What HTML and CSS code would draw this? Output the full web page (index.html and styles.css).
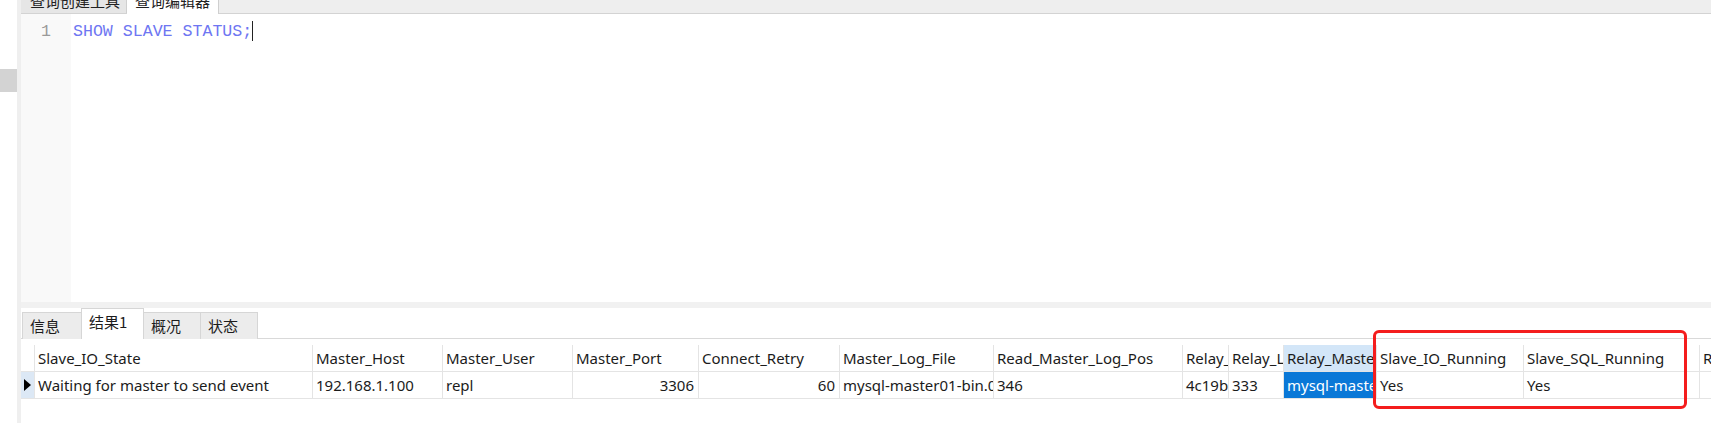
FILE: index.html
```html
<!DOCTYPE html>
<html lang="zh">
<head>
<meta charset="utf-8">
<title>查询编辑器</title>
<link rel="stylesheet" href="styles.css">
</head>
<body>
<div class="app">
  <aside class="sidebar"><div class="side-block"></div></aside>
  <main class="main">
    <div class="top-tabs">
      <div class="ttab"><span>查询创建工具</span></div>
      <div class="ttab active"><span>查询编辑器</span></div>
    </div>
    <div class="editor">
      <div class="gutter"><div class="lineno">1</div></div>
      <div class="code"><span class="kw">SHOW SLAVE STATUS;</span><span class="caret"></span></div>
    </div>
    <div class="splitter"></div>
    <div class="result-tabs">
      <div class="rtab">信息</div>
      <div class="rtab active">结果1</div>
      <div class="rtab">概况</div>
      <div class="rtab">状态</div>
    </div>
    <div class="grid">
      <div class="row head">
        <div class="cell ind"></div>
        <div class="cell">Slave_IO_State</div>
        <div class="cell">Master_Host</div>
        <div class="cell">Master_User</div>
        <div class="cell">Master_Port</div>
        <div class="cell">Connect_Retry</div>
        <div class="cell">Master_Log_File</div>
        <div class="cell">Read_Master_Log_Pos</div>
        <div class="cell">Relay_Log_File</div>
        <div class="cell">Relay_Log_Pos</div>
        <div class="cell sel-head">Relay_Master_Log_File</div>
        <div class="cell">Slave_IO_Running</div>
        <div class="cell">Slave_SQL_Running</div>
        <div class="cell last">Replicate_Do_DB</div>
      </div>
      <div class="row data">
        <div class="cell ind cur"><span class="tri"></span></div>
        <div class="cell">Waiting for master to send event</div>
        <div class="cell">192.168.1.100</div>
        <div class="cell">repl</div>
        <div class="cell num">3306</div>
        <div class="cell num">60</div>
        <div class="cell">mysql-master01-bin.000001</div>
        <div class="cell">346</div>
        <div class="cell">4c19b2e5f1a3-relay-bin.000002</div>
        <div class="cell">333</div>
        <div class="cell sel">mysql-master01-bin.000001</div>
        <div class="cell">Yes</div>
        <div class="cell">Yes</div>
        <div class="cell last"></div>
      </div>
    </div>
  </main>
</div>
<div class="highlight"></div>
</body>
</html>
```
FILE: styles.css
```css
html, body {
  margin: 0;
  padding: 0;
  background: #ffffff;
}
body {
  position: relative;
  width: 1711px;
  height: 423px;
  overflow: hidden;
  font-family: "Noto Sans", "Noto Sans CJK SC", sans-serif;
  color: #1b1b1b;
}
.app {
  display: flex;
  height: 423px;
}
.sidebar {
  width: 17px;
  flex: none;
  background: #ffffff;
  border-right: 4px solid #efefef;
  padding-top: 69px;
}
.side-block {
  height: 23px;
  background: #d3d3d3;
}
.main {
  flex: 1;
  display: flex;
  flex-direction: column;
  min-width: 0;
}
.top-tabs {
  height: 13px;
  flex: none;
  display: flex;
  background: #eeeeee;
  border-bottom: 1px solid #d3d3d3;
}
.ttab {
  height: 13px;
  overflow: hidden;
  white-space: nowrap;
  background: #e6e6e6;
  border-right: 1px solid #cfcfcf;
  font-family: "Noto Sans CJK SC", sans-serif;
  font-size: 15px;
  line-height: 15px;
  color: #222;
  padding: 0 0 0 9px;
  width: 106px;
  box-sizing: border-box;
}
.ttab span {
  display: block;
  margin-top: -7px;
}
.ttab.active {
  background: #ffffff;
  width: 92px;
  margin-bottom: -1px;
  height: 14px;
  padding-left: 8px;
}
.editor {
  height: 288px;
  flex: none;
  display: flex;
}
.gutter {
  width: 50px;
  flex: none;
  background: #f9f9f9;
  box-sizing: border-box;
  padding: 7px 20px 0 0;
  text-align: right;
}
.lineno, .code {
  font-family: "Liberation Mono", monospace;
  font-size: 16.6px;
  line-height: 22px;
}
.lineno {
  color: #9a9a9a;
}
.code {
  padding: 7px 0 0 2px;
  display: flex;
  align-items: flex-start;
}
.kw {
  color: #6e76f2;
}
.caret {
  width: 1px;
  height: 20px;
  margin-top: 0;
  background: #222;
}
.splitter {
  height: 6px;
  flex: none;
  background: #f1f1f1;
}
.result-tabs {
  height: 30px;
  flex: none;
  display: flex;
  align-items: flex-end;
  padding-left: 1px;
  border-bottom: 1px solid #d9d9d9;
}
.rtab {
  height: 27px;
  min-width: 58px;
  box-sizing: border-box;
  padding: 0 0 0 7px;
  background: #ececec;
  border: 1px solid #d6d6d6;
  border-bottom: none;
  margin-right: -1px;
  font-family: "Noto Sans CJK SC", sans-serif;
  font-size: 15px;
  line-height: 26px;
  color: #1c1c1c;
  margin-bottom: -1px;
}
.rtab:first-child {
  width: 60px;
}
.rtab.active {
  height: 31px;
  width: 63px;
  background: #ffffff;
  line-height: 26px;
  padding-bottom: 4px;
  position: relative;
}
.grid {
  padding-top: 6px;
  flex: 1;
}
.row {
  display: grid;
  grid-template-columns: 14px 278px 130px 130px 126px 141px 154px 189px 46px 55px 93px 147px 176px 1fr;
  height: 27px;
  border-bottom: 1px solid #e4e4e4;
  box-sizing: border-box;
}
.cell {
  border-right: 1px solid #e4e4e4;
  overflow: hidden;
  white-space: nowrap;
  font-size: 15px;
  line-height: 26px;
  padding: 0 4px 0 3px;
  box-sizing: border-box;
}
.cell.ind {
  padding: 0;
}
.cell.cur {
  background: #dce8f5;
  display: flex;
  align-items: center;
  padding-left: 3px;
}
.tri {
  width: 0;
  height: 0;
  border-left: 7px solid #000;
  border-top: 6.5px solid transparent;
  border-bottom: 6.5px solid transparent;
}
.cell.num {
  text-align: right;
}
.cell.last {
  border-right: none;
}
.sel-head {
  background: #d3e6f8;
}
.sel {
  background: #0a78d7;
  color: #ffffff;
}
.highlight {
  position: absolute;
  left: 1373px;
  top: 330px;
  width: 314px;
  height: 79px;
  box-sizing: border-box;
  border: 3px solid #f41d1d;
  border-radius: 6px;
}
```
